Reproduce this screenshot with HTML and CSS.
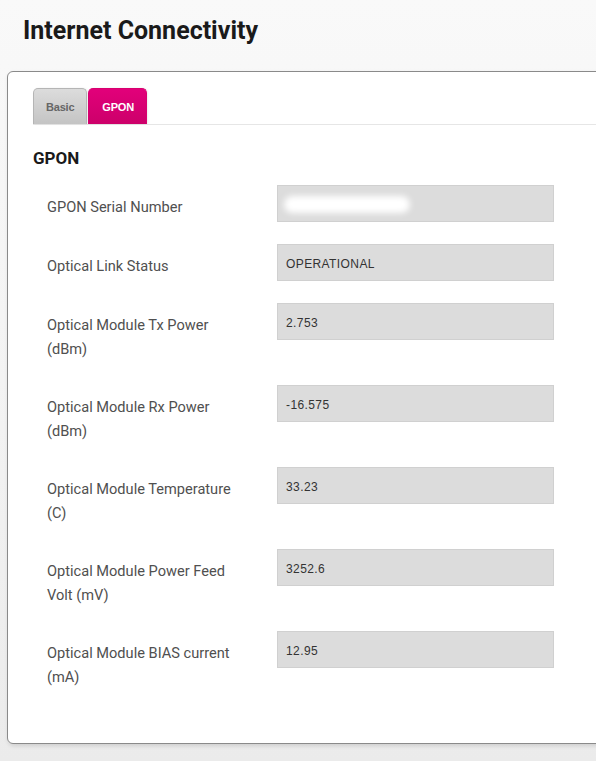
FILE: index.html
```html
<!DOCTYPE html>
<html>
<head>
<meta charset="utf-8">
<link rel="stylesheet" href="styles.css">
</head>
<body>
<header class="page-head">
  <h1 class="page-title">Internet Connectivity</h1>
</header>
<main class="card">
  <nav class="tabs">
    <span class="tab">Basic</span>
    <span class="tab tab-active">GPON</span>
  </nav>
  <h2 class="section-title">GPON</h2>
  <div class="rows">
    <div class="row">
      <div class="label">GPON Serial Number</div>
      <div class="field"><span class="blur"></span></div>
    </div>
    <div class="row">
      <div class="label">Optical Link Status</div>
      <div class="field">OPERATIONAL</div>
    </div>
    <div class="row">
      <div class="label">Optical Module Tx Power (dBm)</div>
      <div class="field">2.753</div>
    </div>
    <div class="row">
      <div class="label">Optical Module Rx Power (dBm)</div>
      <div class="field">-16.575</div>
    </div>
    <div class="row">
      <div class="label">Optical Module Temperature (C)</div>
      <div class="field">33.23</div>
    </div>
    <div class="row">
      <div class="label">Optical Module Power Feed Volt (mV)</div>
      <div class="field">3252.6</div>
    </div>
    <div class="row">
      <div class="label">Optical Module BIAS current (mA)</div>
      <div class="field">12.95</div>
    </div>
  </div>
</main>
</body>
</html>
```

FILE: styles.css
```css
html, body {
  margin: 0;
  padding: 0;
}
body {
  width: 596px;
  height: 761px;
  overflow: hidden;
  background: linear-gradient(to bottom, #f9f9f9 0%, #f3f3f3 50%, #ebebeb 100%);
  font-family: Roboto, "Liberation Sans", sans-serif;
  color: #333;
}
.page-head {
  height: 71px;
  box-sizing: border-box;
  padding: 16px 0 0 23px;
}
.page-title {
  margin: 0;
  font-family: Roboto, sans-serif;
  font-weight: 700;
  font-size: 25px;
  line-height: 30px;
  color: #1a1a1a;
}
.card {
  margin-left: 7px;
  width: 620px;
  height: 673px;
  box-sizing: border-box;
  background: #fff;
  border: 1px solid #8a8a8a;
  border-radius: 6px;
  box-shadow: 1px 2px 4px rgba(0,0,0,0.12);
  padding: 16px 0 0 25px;
}
.tabs {
  display: flex;
  gap: 1px;
  border-bottom: 1px solid #e6e6e6;
  height: 36px;
}
.tab {
  box-sizing: border-box;
  height: 36px;
  padding: 0 12px;
  display: flex;
  align-items: center;
  font-family: "Liberation Sans", Arial, sans-serif;
  font-weight: 700;
  font-size: 11px;
  letter-spacing: -0.2px;
  color: #666;
  border: 1px solid #b5b5b5;
  border-bottom: none;
  border-radius: 5px 5px 0 0;
  background: linear-gradient(to bottom, #dcdcdc, #c4c4c4);
  box-shadow: 1px 0 2px rgba(0,0,0,0.08);
}
.tab-active {
  color: #fff;
  border-color: #d8006f;
  background: linear-gradient(to bottom, #e2007a, #cc006a);
  padding: 0 12px 0 13px;
}
.section-title {
  margin: 0;
  padding-top: 23px;
  font-family: Roboto, sans-serif;
  font-weight: 700;
  font-size: 17px;
  line-height: 20px;
  color: #1a1a1a;
}
.rows {
  padding: 17px 0 0 14px;
  display: flex;
  flex-direction: column;
  gap: 22px;
}
.row {
  display: flex;
  align-items: flex-start;
}
.label {
  width: 230px;
  box-sizing: border-box;
  padding: 10px 35px 2px 0;
  font-size: 14.6px;
  line-height: 24px;
  color: #505050;
}
.field {
  width: 277px;
  height: 37px;
  box-sizing: border-box;
  background: #dcdcdc;
  border: 1px solid #d0d0d0;
  padding: 12px 8px 0;
  font-family: "Liberation Sans", Arial, sans-serif;
  font-size: 12px;
  line-height: 14px;
  letter-spacing: 0.4px;
  color: #333;
  position: relative;
}
.blur {
  position: absolute;
  left: 6px;
  top: 10px;
  width: 126px;
  height: 17px;
  border-radius: 9px;
  background: #fff;
  filter: blur(3px);
}
```
